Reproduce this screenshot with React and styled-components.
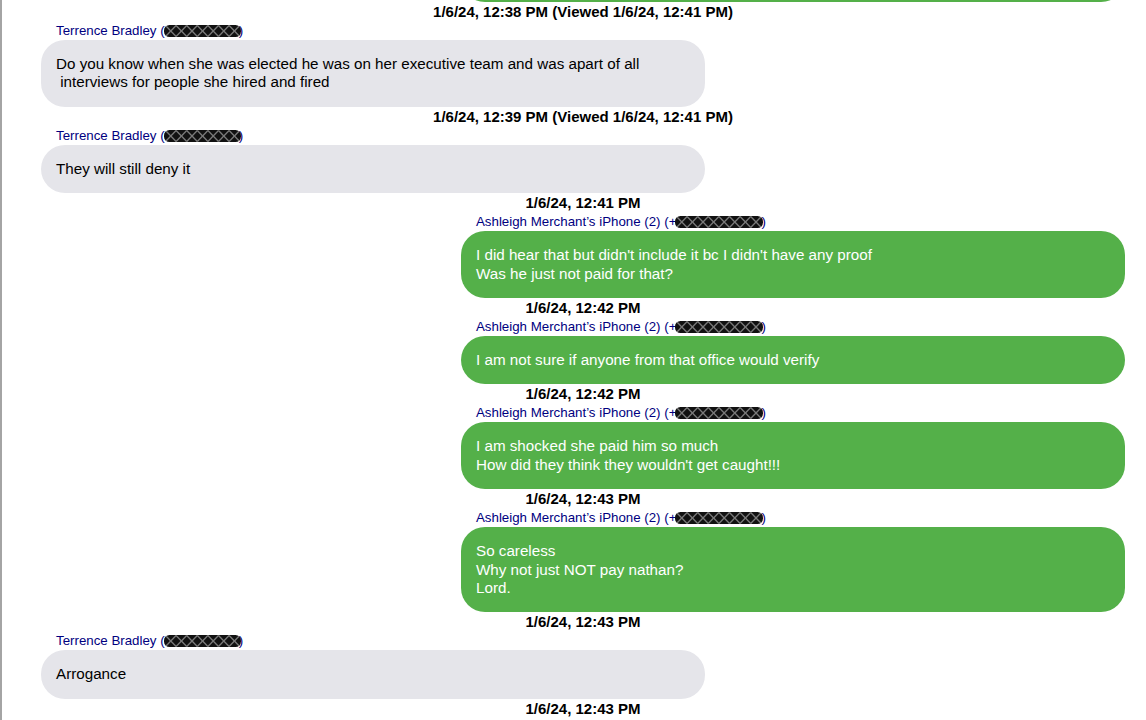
import React from "react";
import styled, { createGlobalStyle } from "styled-components";

const Global = createGlobalStyle`
  html, body { margin: 0; padding: 0; background: #fff; overflow: hidden; }
  body { font-family: "Liberation Sans", Arial, sans-serif; }
`;

const Page = styled.div`
  height: 720px;
  overflow: hidden;
  border-left: 2px solid #a4a4a4;
  background: #fff;
  box-sizing: border-box;
`;

const Thread = styled.div`
  display: flex;
  flex-direction: column;
  margin-top: -46.4px;
  padding: 0 21px 0 39px;
`;

const Stamp = styled.div`
  height: 20px;
  line-height: 20px;
  text-align: center;
  font-size: 15px;
  font-weight: bold;
  color: #000;
`;

const Name = styled.div`
  height: 18px;
  line-height: 18px;
  font-size: 13.3px;
  color: #000080;
  white-space: nowrap;
  padding-left: ${(p) => (p.$out ? "435px" : "15px")};
  display: flex;
  align-items: center;
`;

const Bubble = styled.div`
  width: 664px;
  box-sizing: border-box;
  padding: 15px 15px;
  border-radius: 24px;
  font-size: 15.2px;
  line-height: 18.4px;
  white-space: pre-wrap;
  align-self: ${(p) => (p.$out ? "flex-end" : "flex-start")};
  background: ${(p) => (p.$out ? "#54b049" : "#e5e5ea")};
  color: ${(p) => (p.$out ? "#fff" : "#000")};
`;

const Paren = styled.span`
  position: relative;
  z-index: 0;
`;

const RedactSvg = styled.svg`
  display: inline-block;
  margin: 0 -2px 0 -1px;
  position: relative;
  z-index: 1;
`;

function Redact({ count }) {
  const cell = 10.6;
  const w = Math.round(count * cell);
  const h = 12;
  const id = `clip${count}`;
  const lines = [];
  for (let i = 0; i < count; i++) {
    const x0 = 1.5 + i * cell;
    const x1 = 1.5 + (i + 1) * cell;
    lines.push(<line key={`a${i}`} x1={x0} y1={0.5} x2={x1} y2={h - 0.5} />);
    lines.push(<line key={`b${i}`} x1={x0} y1={h - 0.5} x2={x1} y2={0.5} />);
  }
  return (
    <RedactSvg width={w + 3} height={h} viewBox={`0 0 ${w + 3} ${h}`}>
      <defs>
        <clipPath id={id}>
          <rect x="0" y="0" width={w + 3} height={h} rx="5.5" />
        </clipPath>
      </defs>
      <g clipPath={`url(#${id})`}>
        <rect x="0" y="0" width={w + 3} height={h} fill="#111" />
        <g stroke="#7a7a7a" strokeWidth="1.3">{lines}</g>
      </g>
    </RedactSvg>
  );
}

const TB = () => (
  <>
    Terrence Bradley&nbsp;<Paren>(</Paren>
    <Redact count={7} />
    <Paren>)</Paren>
  </>
);

const AM = () => (
  <>
    Ashleigh Merchant’s iPhone (2) (+
    <Redact count={8} />
    <Paren>)</Paren>
  </>
);

const messages = [
  {
    stamp: "1/6/24, 12:38 PM (Viewed 1/6/24, 12:41 PM)",
    out: false,
    text:
      "Do you know when she was elected he was on her executive team and was apart of all\n interviews for people she hired and fired",
  },
  {
    stamp: "1/6/24, 12:39 PM (Viewed 1/6/24, 12:41 PM)",
    out: false,
    text: "They will still deny it",
  },
  {
    stamp: "1/6/24, 12:41 PM",
    out: true,
    text:
      "I did hear that but didn't include it bc I didn't have any proof\nWas he just not paid for that?",
  },
  {
    stamp: "1/6/24, 12:42 PM",
    out: true,
    text: "I am not sure if anyone from that office would verify",
  },
  {
    stamp: "1/6/24, 12:42 PM",
    out: true,
    text: "I am shocked she paid him so much\nHow did they think they wouldn't get caught!!!",
  },
  {
    stamp: "1/6/24, 12:43 PM",
    out: true,
    text: "So careless\nWhy not just NOT pay nathan?\nLord.",
  },
  {
    stamp: "1/6/24, 12:43 PM",
    out: false,
    text: "Arrogance",
  },
];

export default function App() {
  return (
    <>
      <Global />
      <Page>
        <Thread>
          <Bubble $out>{" "}</Bubble>
          {messages.map((m, i) => (
            <React.Fragment key={i}>
              <Stamp>{m.stamp}</Stamp>
              <Name $out={m.out}>{m.out ? <AM /> : <TB />}</Name>
              <Bubble $out={m.out}>{m.text}</Bubble>
            </React.Fragment>
          ))}
          <Stamp>1/6/24, 12:43 PM</Stamp>
        </Thread>
      </Page>
    </>
  );
}
